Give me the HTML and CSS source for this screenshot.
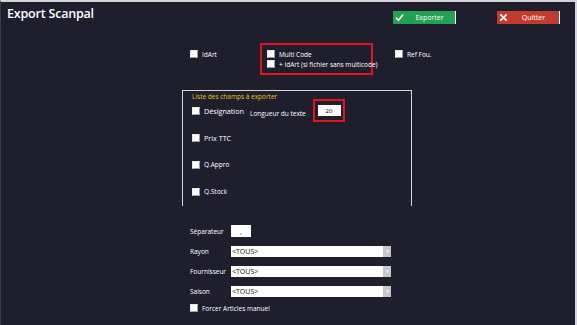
FILE: index.html
```html
<!DOCTYPE html>
<html lang="fr">
<head>
    <meta charset="UTF-8">
    <title>Export Scanpal</title>
    <link rel="stylesheet" href="styles.css">
</head>
<body>
    <div class="window">
        <header class="top">
            <h1 class="title">Export Scanpal</h1>
            <div class="actions">
                <button class="btn btn-ok">
                    <svg class="ico" viewBox="0 0 10 10"><path d="M1 5.2 L3.8 8 L9 1.6" fill="none" stroke="#fff" stroke-width="1.8"/></svg>
                    <span>Exporter</span>
                </button>
                <button class="btn btn-quit">
                    <svg class="ico" viewBox="0 0 10 10"><path d="M1.5 1.5 L8.5 8.5 M8.5 1.5 L1.5 8.5" fill="none" stroke="#fff" stroke-width="2"/></svg>
                    <span>Quitter</span>
                </button>
            </div>
        </header>

        <div class="content">
            <div class="options">
                <label class="check opt-first"><span class="box"></span>IdArt</label>
                <div class="redbox">
                    <label class="check"><span class="box"></span>Multi Code</label>
                    <label class="check"><span class="box"></span>+ IdArt (si fichier sans multicode)</label>
                </div>
                <label class="check opt-last"><span class="box"></span>Ref Fou.</label>
            </div>

            <div class="fields">
                <div class="fields-title">Liste des champs à exporter</div>
                <div class="field-row">
                    <label class="check big"><span class="box"></span>Désignation</label>
                    <span class="len-label">Longueur du texte</span>
                    <div class="len-box"><input class="len-input" value="20"></div>
                </div>
                <div class="field-row">
                    <label class="check big"><span class="box"></span>Prix TTC</label>
                </div>
                <div class="field-row">
                    <label class="check"><span class="box"></span>Q.Appro</label>
                </div>
                <div class="field-row">
                    <label class="check"><span class="box"></span>Q.Stock</label>
                </div>
            </div>

            <div class="form">
                <span class="lbl">Séparateur</span>
                <input class="sep" value=",">
                <span class="lbl">Rayon</span>
                <div class="select"><span>&lt;TOUS&gt;</span><span class="arrow">&#9662;</span></div>
                <span class="lbl">Fournisseur</span>
                <div class="select"><span>&lt;TOUS&gt;</span><span class="arrow">&#9662;</span></div>
                <span class="lbl">Saison</span>
                <div class="select"><span>&lt;TOUS&gt;</span><span class="arrow">&#9662;</span></div>
            </div>

            <label class="check force"><span class="box"></span>Forcer Articles manuel</label>
        </div>
    </div>
</body>
</html>
```

FILE: styles.css
```css
body {
    margin: 0;
    background-color: #1e1e2d;
    font-family: "Open Sans", "Noto Sans", sans-serif;
    color: #fff;
}

.window {
    width: 577px;
    height: 325px;
    box-sizing: border-box;
    border-top: 2px solid #d4d4d8;
    border-right: 2px solid #d4d4d8;
    border-left: 1px solid #3a3a48;
    overflow: hidden;
}

.top {
    display: flex;
    align-items: flex-start;
    height: 41px;
}

.title {
    margin: 3px 0 0 6px;
    font-size: 12.5px;
    font-weight: 600;
    letter-spacing: -0.2px;
}

.actions {
    display: flex;
    margin-left: auto;
    margin-right: 15px;
    margin-top: 9px;
    gap: 41px;
}

.btn {
    display: flex;
    align-items: center;
    height: 13px;
    padding: 0;
    border: none;
    border-right: 1px solid #fff;
    color: #fff;
    font-family: inherit;
    font-size: 7px;
    cursor: pointer;
}

.btn span {
    flex: 1;
    text-align: center;
}

.btn-ok {
    width: 63px;
    background-color: #22a153;
}

.btn-quit {
    width: 63px;
    background-color: #c23c2d;
}

.ico {
    width: 9px;
    height: 9px;
    margin-left: 2px;
}

.content {
    padding-left: 189px;
}

.check {
    display: flex;
    align-items: center;
    font-size: 6.5px;
    height: 10px;
    white-space: nowrap;
}

.box {
    width: 6px;
    height: 6px;
    background-color: #fff;
    border: 1px solid #9a9aa4;
    border-top-color: #e8e8e8;
    border-left-color: #e8e8e8;
    margin-right: 4px;
    flex-shrink: 0;
}

.options {
    display: flex;
    align-items: flex-start;
}

.opt-first {
    width: 70px;
    margin-top: 6px;
}

.redbox {
    width: 113px;
    height: 32px;
    box-sizing: border-box;
    border: 2px solid #e3141f;
    padding: 4px 0 0 5px;
}

.opt-last {
    margin-left: 22px;
    margin-top: 6px;
}

.fields {
    width: 230px;
    height: 116px;
    box-sizing: border-box;
    margin: 15px 0 0 -8px;
    padding: 0 0 0 9px;
    border: 1px solid #d4d4d8;
    border-bottom: none;
}

.fields-title {
    color: #e4c21c;
    font-size: 6.5px;
    height: 12px;
    line-height: 12px;
}

.field-row {
    display: flex;
    align-items: center;
    height: 27px;
}

.field-row:nth-child(2) {
    margin-top: -6px;
}

.check.big {
    font-size: 7.2px;
    width: 58px;
}

.len-label {
    font-size: 6.5px;
    width: 63px;
    padding-top: 5px;
}

.len-box {
    width: 32px;
    height: 23px;
    box-sizing: border-box;
    border: 2px solid #e3141f;
    display: flex;
    align-items: center;
    justify-content: center;
}

.len-input {
    width: 23px;
    height: 11px;
    box-sizing: border-box;
    border: none;
    padding: 0;
    text-align: center;
    font-family: inherit;
    font-size: 6px;
    color: #000;
}

.form {
    display: grid;
    grid-template-columns: 41px 160px;
    row-gap: 9px;
    align-items: center;
    margin-top: 19px;
}

.lbl {
    font-size: 6.5px;
}

.sep {
    width: 20px;
    height: 12px;
    box-sizing: border-box;
    border: none;
    padding: 0;
    text-align: center;
    font-family: inherit;
    font-size: 7px;
    color: #000;
}

.select {
    display: flex;
    align-items: center;
    height: 11px;
    background-color: #fff;
    color: #111;
    font-size: 7px;
}

.select span:first-child {
    flex: 1;
    padding-left: 1px;
}

.arrow {
    width: 8px;
    height: 11px;
    line-height: 11px;
    background-color: #c8c8cc;
    color: #f0f0f0;
    font-size: 6px;
    text-align: center;
}

.force {
    margin-top: 6px;
}
```
